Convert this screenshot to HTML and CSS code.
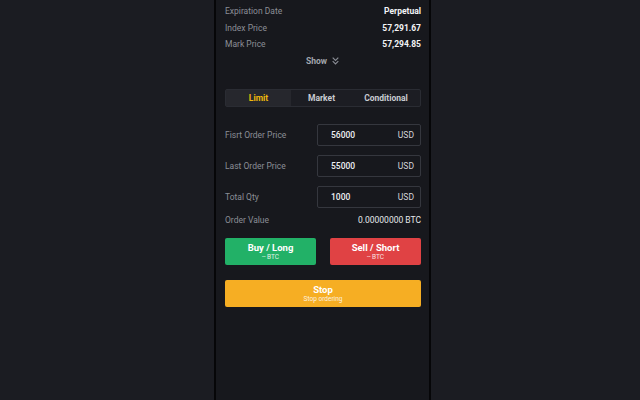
FILE: index.html
```html
<!DOCTYPE html>
<html lang="en">
<head>
    <meta charset="UTF-8">
    <meta name="viewport" content="width=device-width, initial-scale=1.0">
    <title>Order Panel</title>
    <link rel="stylesheet" href="styles.css">
</head>
<body>
    <div class="page">
        <main class="panel">
            <section class="info">
                <div class="info-row"><span class="label">Expiration Date</span><span class="value">Perpetual</span></div>
                <div class="info-row"><span class="label">Index Price</span><span class="value">57,291.67</span></div>
                <div class="info-row"><span class="label">Mark Price</span><span class="value">57,294.85</span></div>
                <div class="show">Show
                    <svg width="9" height="9" viewBox="0 0 8 8" fill="none" stroke="#8a8d95" stroke-width="1">
                        <path d="M1.5 1.5 L4 4 L6.5 1.5"/>
                        <path d="M1.5 4.5 L4 7 L6.5 4.5"/>
                    </svg>
                </div>
            </section>

            <nav class="tabs">
                <div class="tab active">Limit</div>
                <div class="tab">Market</div>
                <div class="tab">Conditional</div>
            </nav>

            <form class="order-form">
                <div class="field">
                    <label>Fisrt Order Price</label>
                    <div class="input"><span>56000</span><span class="unit">USD</span></div>
                </div>
                <div class="field">
                    <label>Last Order Price</label>
                    <div class="input"><span>55000</span><span class="unit">USD</span></div>
                </div>
                <div class="field">
                    <label>Total Qty</label>
                    <div class="input"><span>1000</span><span class="unit">USD</span></div>
                </div>
                <div class="order-value">
                    <span class="label">Order Value</span>
                    <span class="amount">0.00000000 BTC</span>
                </div>
            </form>

            <div class="actions">
                <button type="button" class="btn buy">Buy / Long<small>-- BTC</small></button>
                <button type="button" class="btn sell">Sell / Short<small>-- BTC</small></button>
            </div>
            <button type="button" class="btn stop">Stop<small>Stop ordering</small></button>
        </main>
    </div>
</body>
</html>
```

FILE: styles.css
```css
body {
    margin: 0;
    padding: 0;
    background: #1b1c22;
    font-family: Roboto, "Liberation Sans", sans-serif;
    color: #eaecef;
}

.page {
    display: flex;
    padding-left: 214px;
    height: 400px;
    overflow: hidden;
}

.panel {
    width: 196px;
    padding: 3px 8px 0 9px;
    background: #17181d;
    border-left: 2px solid #060608;
    border-right: 2px solid #060608;
    min-height: 400px;
}

.info-row {
    display: flex;
    justify-content: space-between;
    align-items: center;
    height: 16.5px;
    font-size: 8.5px;
}

.label {
    color: #8b8e96;
}

.value {
    color: #f3f4f6;
    font-weight: 700;
}

.show {
    display: flex;
    justify-content: center;
    align-items: center;
    gap: 4px;
    margin-top: 1px;
    height: 14px;
    font-size: 8.5px;
    font-weight: 700;
    color: #a3a6ad;
}

.tabs {
    display: flex;
    margin-top: 21px;
    height: 16px;
    border: 1px solid #2a2c33;
    border-radius: 2px;
    background: #1c1d23;
}

.tab {
    flex: 1;
    display: flex;
    align-items: center;
    justify-content: center;
    font-size: 8.5px;
    font-weight: 700;
    color: #c9ccd2;
}

.tab.active {
    flex: 0 0 65px;
    background: #26272d;
    color: #f0b90b;
}

.tab:last-child {
    flex: 0 0 68px;
}

.order-form {
    margin-top: 17px;
}

.field {
    display: flex;
    justify-content: space-between;
    align-items: center;
    margin-bottom: 9px;
}

.field:nth-child(3) {
    margin-bottom: 5px;
}

.field label {
    font-size: 8.5px;
    color: #8b8e96;
}

.input {
    box-sizing: border-box;
    display: flex;
    justify-content: space-between;
    align-items: center;
    width: 104px;
    height: 22px;
    padding: 0 6px 0 13px;
    border: 1px solid #35373e;
    border-radius: 2px;
    font-size: 8.5px;
    font-weight: 500;
    color: #eef0f3;
}

.input .unit {
    font-weight: 400;
    color: #d4d6db;
}

.order-value {
    display: flex;
    justify-content: space-between;
    align-items: center;
    height: 14px;
    font-size: 8.5px;
}

.order-value .amount {
    color: #e6e8ec;
}

.actions {
    display: flex;
    justify-content: space-between;
    margin-top: 11px;
}

.btn {
    display: flex;
    flex-direction: column;
    align-items: center;
    justify-content: center;
    height: 27px;
    border: none;
    border-radius: 2px;
    color: #fff;
    font-family: Roboto, "Liberation Sans", sans-serif;
    font-size: 9.5px;
    font-weight: 700;
    line-height: 11px;
    padding: 0;
}

.btn small {
    font-size: 6.5px;
    font-weight: 400;
    line-height: 8px;
    opacity: 0.85;
}

.buy {
    width: 91px;
    background: #22b167;
}

.sell {
    width: 91px;
    background: #e04244;
}

.stop {
    width: 196px;
    margin-top: 15px;
    background: #f6ae23;
}
```
